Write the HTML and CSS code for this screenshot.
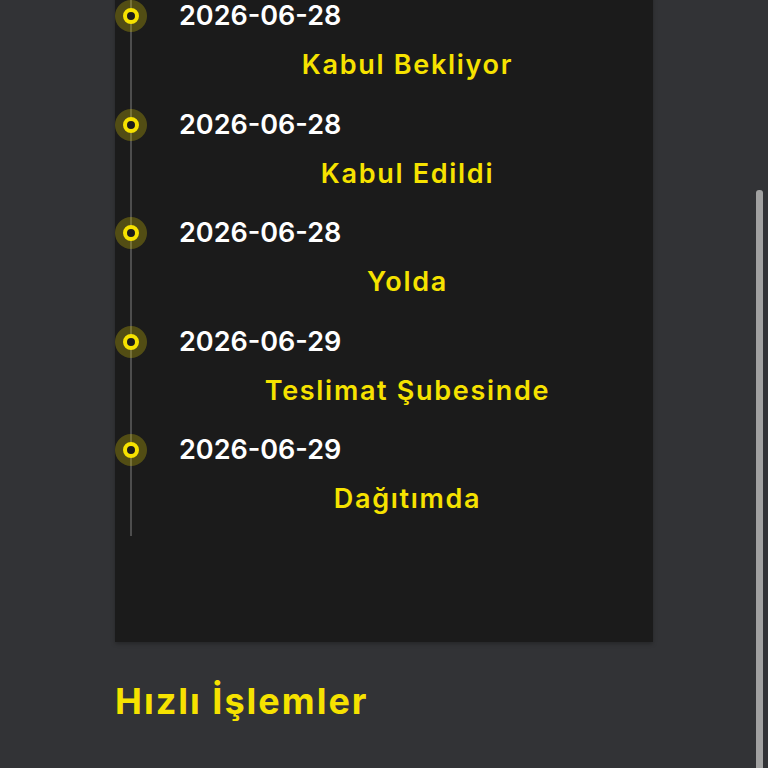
FILE: index.html
```html
<!DOCTYPE html>
<html lang="tr">
  <head>
    <meta charset="UTF-8" />
    <title>Gönderi Takibi</title>
    <link rel="stylesheet" href="styles.css">
  </head>
  <body>
    <div class="page" id="page">
      <div class="wrapper">
        <div class="card">
          <div class="timeline">
            <div class="event">
              <span class="dot"></span>
              <div class="event-body">
                <div class="date">2026-06-28</div>
                <div class="status">Kabul Bekliyor</div>
              </div>
            </div>
            <div class="event">
              <span class="dot"></span>
              <div class="event-body">
                <div class="date">2026-06-28</div>
                <div class="status">Kabul Edildi</div>
              </div>
            </div>
            <div class="event">
              <span class="dot"></span>
              <div class="event-body">
                <div class="date">2026-06-28</div>
                <div class="status">Yolda</div>
              </div>
            </div>
            <div class="event">
              <span class="dot"></span>
              <div class="event-body">
                <div class="date">2026-06-29</div>
                <div class="status">Teslimat Şubesinde</div>
              </div>
            </div>
            <div class="event">
              <span class="dot"></span>
              <div class="event-body">
                <div class="date">2026-06-29</div>
                <div class="status">Dağıtımda</div>
              </div>
            </div>
          </div>
        </div>

        <h2 class="section-title">Hızlı İşlemler</h2>
      </div>
    </div>
    <!-- kaydırma çubuğu -->
    <div class="scroll-thumb"></div>

    <script>
      // sayfa açılınca en alta kaydır
      const page = document.getElementById("page");
      page.scrollTop = page.scrollHeight;
    </script>
  </body>
</html>
```

FILE: styles.css
```css
html {
  background-color: #323336;
}
body {
  margin: 0;
  font-family: Inter, "Noto Sans", sans-serif;
  color: #ffffff;
}

.page {
  height: 100vh;
  overflow-y: scroll;
}
.scroll-thumb {
  position: fixed;
  top: 190px;
  bottom: 0;
  right: 5px;
  width: 7px;
  border-radius: 3px 3px 0 0;
  background-color: #a1a1a1;
}

.wrapper {
  padding: 30px 0 43px 115px;
  width: 538px;
}

.card {
  background-color: #1b1b1b;
  padding: 219px 17px 106px 0;
  box-shadow: 0 2px 4px rgba(0, 0, 0, 0.25);
}

.timeline {
  position: relative;
  display: flex;
  flex-direction: column;
  gap: 23.5px;
  padding-bottom: 19px;
}
.timeline::before {
  content: "";
  position: absolute;
  left: 15px;
  top: 0;
  bottom: 0;
  width: 2px;
  background-color: #4d4d4d;
}

.event {
  display: grid;
  grid-template-columns: 32px 1fr;
  column-gap: 32px;
  align-items: start;
}
.dot {
  position: relative;
  width: 32px;
  height: 32px;
  margin-top: 2px;
  border-radius: 50%;
  background-color: rgba(246, 226, 0, 0.25);
  display: flex;
  align-items: center;
  justify-content: center;
}
.dot::after {
  content: "";
  width: 8px;
  height: 8px;
  border: 4px solid #f6e200;
  border-radius: 50%;
  background-color: #1b1b1b;
}

.date {
  font-size: 27px;
  font-weight: 600;
  line-height: 36px;
}
.status {
  margin-top: 13px;
  font-size: 27px;
  font-weight: 600;
  letter-spacing: 1.7px;
  line-height: 36px;
  text-align: center;
  color: #f6e200;
}

.section-title {
  margin: 35px 0 0;
  font-size: 36px;
  font-weight: 700;
  letter-spacing: 2px;
  line-height: 48px;
  color: #f6e200;
}
```
